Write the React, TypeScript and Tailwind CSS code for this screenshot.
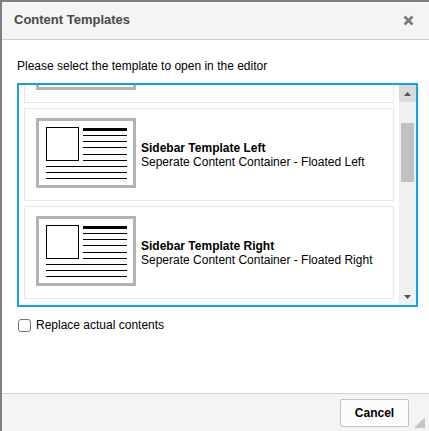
import React from "react";

function Preview() {
  return (
    <div className="w-[100px] h-[70px] border-[3px] border-[#b3b3b3] bg-white shrink-0">
      <svg width="94" height="64" viewBox="3 3 94 64" shapeRendering="crispEdges">
        <rect x="10.5" y="9.5" width="32" height="33" fill="none" stroke="#000" strokeWidth="1" />
        <rect x="47" y="10" width="44" height="3" fill="#000" />
        {[17, 23, 29, 36, 42].map((y) => (
          <rect key={y} x="47" y={y} width="44" height="1" fill="#000" />
        ))}
        {[48, 54, 60].map((y) => (
          <rect key={y} x="10" y={y} width="81" height="1" fill="#000" />
        ))}
      </svg>
    </div>
  );
}

function Item({ title, sub }: { title: string; sub: string }) {
  return (
    <div className="h-[93px] border border-[#e8e8e8] bg-white flex items-start pl-[11px] pt-[9px]">
      <Preview />
      <div className="ml-[5px] self-center -mt-[9px] text-[12px] leading-[14px] text-black">
        <div className="font-bold">{title}</div>
        <div>{sub}</div>
      </div>
    </div>
  );
}

export default function App() {
  return (
    <div
      className="w-[429px] h-[431px] bg-[#7f7f7f] pl-[2px] pt-[2px] overflow-hidden"
      style={{ fontFamily: '"Liberation Sans", Arial, sans-serif' }}
    >
      <div className="w-[427px] h-[429px] bg-white flex flex-col relative">
        <div className="h-[38px] shrink-0 bg-[#f4f4f4] border-b border-[#d1d1d1] flex items-center justify-between pl-[12px] pr-[15px]">
          <div className="text-[13px] font-bold text-[#484848] leading-[16px] -mt-[1px]">Content Templates</div>
          <svg width="11" height="11" viewBox="0 0 11 11" className="-mt-[1px]">
            <path d="M1.5 1.5 L9.5 9.5 M9.5 1.5 L1.5 9.5" stroke="#7a7a7a" strokeWidth="2.6" strokeLinecap="butt" />
          </svg>
        </div>

        <div className="flex-1 px-[15px] pt-[19px]">
          <div className="text-[12px] leading-[14px] text-black">Please select the template to open in the editor</div>
          <div className="mt-[10px] w-[401px] h-[224px] border-2 border-[#17a0ec] flex">
            <div className="flex-1 overflow-hidden px-[5px]">
              <div className="-mt-[75px] flex flex-col gap-[5px]">
                <div className="h-[93px] border border-[#e8e8e8] bg-white pl-[11px] pt-[9px]">
                  <Preview />
                </div>
                <Item title="Sidebar Template Left" sub="Seperate Content Container - Floated Left" />
                <Item title="Sidebar Template Right" sub="Seperate Content Container - Floated Right" />
              </div>
            </div>
            <div className="w-[17px] bg-[#f0f0f0] flex flex-col shrink-0">
              <div className="h-[17px] bg-[#dadada] flex items-center justify-center">
                <svg width="7" height="4" viewBox="0 0 7 4">
                  <path d="M3.5 0 L7 4 L0 4 Z" fill="#505050" />
                </svg>
              </div>
              <div className="mt-[21px] mx-[2px] h-[59px] bg-[#c1c1c1]" />
              <div className="flex-1" />
              <div className="h-[17px] flex items-center justify-center">
                <svg width="7" height="4" viewBox="0 0 7 4">
                  <path d="M0 0 L7 0 L3.5 4 Z" fill="#505050" />
                </svg>
              </div>
            </div>
          </div>
          <div className="mt-[11px] flex items-center">
            <div className="ml-[1px] w-[13px] h-[13px] rounded-[3px] border border-[#767676] bg-white" />
            <span className="ml-[5px] text-[12px] leading-[14px] text-black">Replace actual contents</span>
          </div>
        </div>

        <div className="h-[38px] shrink-0 bg-[#f4f4f4] border-t border-[#d3d3d3] flex items-start justify-end pr-[20px] pt-[5px]">
          <button className="w-[69px] h-[28px] rounded-[2px] border border-[#c4c4c4] bg-[#fcfcfc] text-[12px] font-bold text-black leading-none">
            Cancel
          </button>
        </div>
        <svg width="11" height="11" viewBox="0 0 11 11" className="absolute right-[4px] bottom-[3px]">
          <path d="M11 0 L11 11 L0 11 Z" fill="#c6c6c6" />
        </svg>
      </div>
    </div>
  );
}
